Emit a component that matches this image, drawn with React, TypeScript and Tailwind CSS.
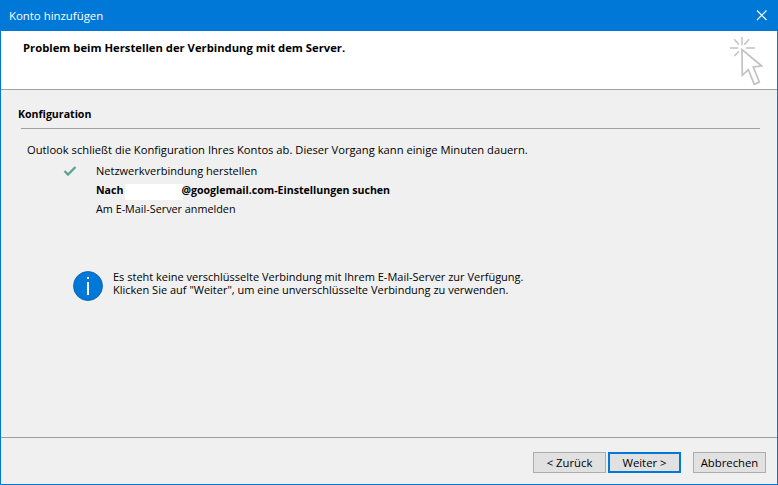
export default function App() {
  const font = "font-['Open_Sans','Noto_Sans',sans-serif]";
  return (
    <div className={`w-[778px] h-[485px] flex flex-col bg-[#f0f0f0] border border-[#0078d7] border-t-0 overflow-hidden text-[11px] leading-[13px] text-black ${font}`}>
      <div className="h-[31px] shrink-0 -mx-px bg-[#0078d7] flex items-center justify-between pl-[9px] pr-[10px] text-white text-[11.4px]">
        <span>Konto hinzufügen</span>
        <svg width="12" height="12" viewBox="0 0 12 12">
          <path d="M1 0.500L10.500 10M10.500 0.500L1 10" stroke="#fff" strokeWidth="1.2" fill="none" />
        </svg>
      </div>
      <div className="h-[59px] shrink-0 bg-white border-b border-[#a0a0a0] flex justify-between pl-[22px] pr-[12px]">
        <div className="pt-[10px] font-bold text-[11.25px]">Problem beim Herstellen der Verbindung mit dem Server.</div>
        <svg width="36" height="50" viewBox="0 0 36 50" className="mt-[5px]">
          <g stroke="#c2c2c2" strokeWidth="1.5" fill="none">
            <path d="M1 12H9.300M16.700 12H26M13 1V9.300M5.300 3.300L10 8.700M20 3.300L15.300 8.700M5.300 20L10 15.300" />
            <path d="M13 13.500L13.300 39.300L19.300 33.700L25.300 48.300L30.300 46L24.300 31L32.700 30Z" strokeWidth="1.7" />
          </g>
        </svg>
      </div>
      <div className="flex-1 flex flex-col min-h-0">
        <div className="pl-[17px] pr-[17px] pt-[18px]">
          <div className="font-bold text-[10.6px]">Konfiguration</div>
          <div className="mt-[7px] ml-[3px] h-px bg-[#a0a0a0]" />
        </div>
        <div className="pl-[26px] pt-[14px] text-[11.2px]">Outlook schließt die Konfiguration Ihres Kontos ab. Dieser Vorgang kann einige Minuten dauern.</div>
        <div className="pl-[62px] pt-[5px] flex flex-col">
          <div className="flex items-center h-[19px]">
            <svg width="14" height="12" viewBox="0 0 14 12" className="w-[34px] shrink-0 -ml-[10px] mr-[10px]">
              <path d="M1.500 6L5 9.500L12.500 2" stroke="#5fa38f" strokeWidth="2.400" fill="none" />
            </svg>
            <span className="-ml-[1px]">Netzwerkverbindung herstellen</span>
          </div>
          <div className="flex items-center h-[19px] pl-[33px] pt-[2px] font-bold text-[10.6px]">
            <span>Nach</span>
            <span className="w-[58px] h-[16px] mt-[3px] ml-[2px] -mr-[2px] bg-white" />
            <span>@googlemail.com-Einstellungen suchen</span>
          </div>
          <div className="flex items-center h-[19px] pl-[33px] text-[10.8px]">Am E-Mail-Server anmelden</div>
        </div>
        <div className="pl-[72px] pt-[52px] flex items-start gap-[10px]">
          <svg width="30" height="30" viewBox="0 0 30 30" className="mt-[1px]">
            <circle cx="15" cy="15" r="14.500" fill="#0078d7" stroke="#0a5ea8" strokeWidth="0.800" />
            <rect x="14" y="11" width="2" height="13" fill="#fff" />
            <rect x="14" y="6" width="2" height="2" fill="#fff" />
          </svg>
          <div>
            <div>Es steht keine verschlüsselte Verbindung mit Ihrem E-Mail-Server zur Verfügung.</div>
            <div>Klicken Sie auf "Weiter", um eine unverschlüsselte Verbindung zu verwenden.</div>
          </div>
        </div>
        <div className="flex-1" />
        <div className="h-px bg-[#a0a0a0]" />
        <div className="h-[46px] shrink-0 flex items-start justify-end pt-[14px] pr-[11px] text-[11.3px]">
          <button className="w-[73px] h-[21px] bg-[#e1e1e1] border border-[#adadad] flex items-center justify-center">&lt; Zurück</button>
          <button className="w-[73px] h-[21px] ml-[2px] bg-[#e1e1e1] border-2 border-[#0078d7] flex items-center justify-center">Weiter &gt;</button>
          <button className="w-[73px] h-[21px] ml-[12px] bg-[#e1e1e1] border border-[#adadad] flex items-center justify-center">Abbrechen</button>
        </div>
      </div>
    </div>
  );
}
